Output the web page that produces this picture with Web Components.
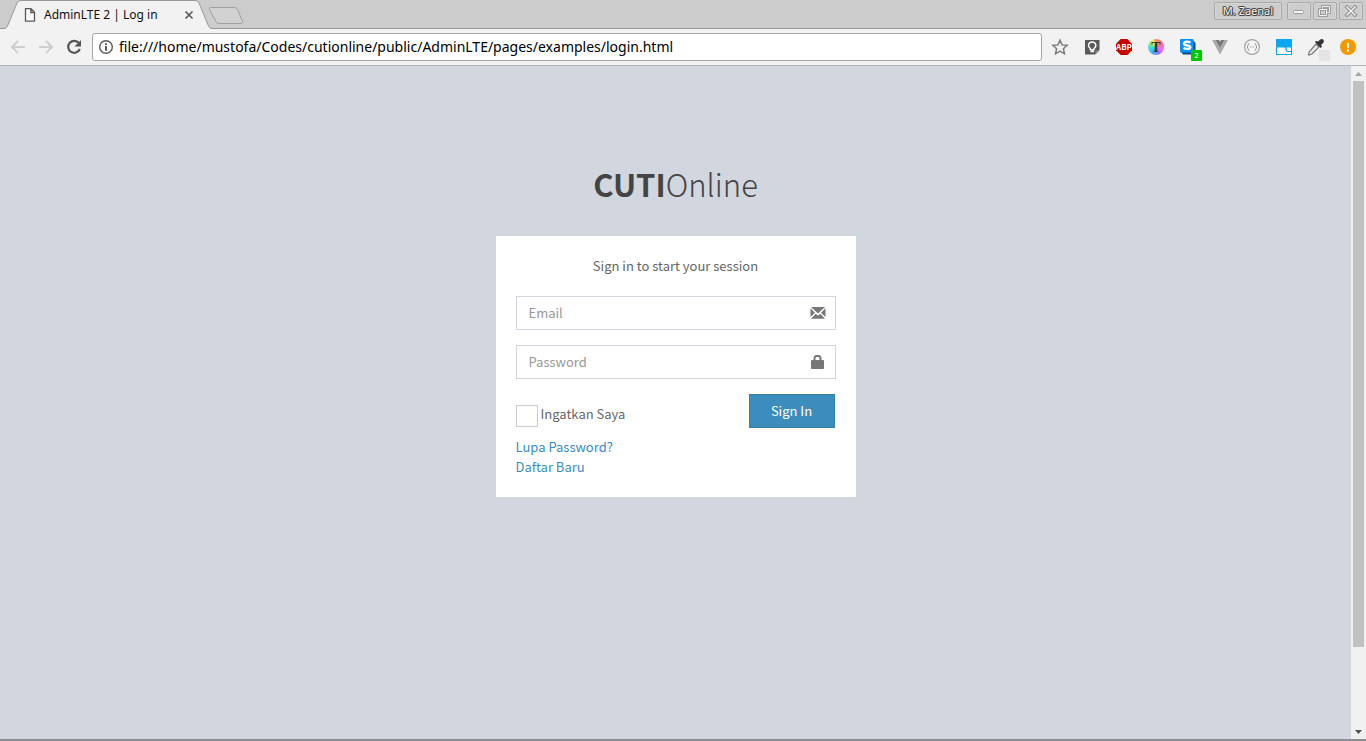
<!DOCTYPE html>
<html lang="id">
<head>
<meta charset="utf-8">
<meta name="viewport" content="width=device-width, initial-scale=1">
<title>AdminLTE 2 | Log in</title>
<style>
  html, body { margin: 0; height: 100%; }
  body { font: 14px/20px "Noto Sans", sans-serif; background: #d2d6de; }
</style>
</head>
<body>
<browser-window>
  <title-bar slot="title">
    <browser-tab>AdminLTE 2 | Log in</browser-tab>
    <window-controls slot="controls" user="M. Zaenal"></window-controls>
  </title-bar>
  <tool-bar slot="toolbar" address="file:///home/mustofa/Codes/cutionline/public/AdminLTE/pages/examples/login.html"></tool-bar>
  <login-page>
    <login-form></login-form>
  </login-page>
</browser-window>

<script>
const define = (name, html, setup) => {
  const template = document.createElement('template');
  template.innerHTML = html;
  customElements.define(name, class extends HTMLElement {
    constructor() {
      super();
      this.attachShadow({ mode: 'open' }).append(template.content.cloneNode(true));
    }
    connectedCallback() { if (setup) setup(this, this.shadowRoot); }
  });
};

define('browser-window', `
  <style>
    :host { display: flex; flex-direction: column; height: 100vh; box-sizing: border-box; border-bottom: 2px solid #8b8e93; }
    .view { flex: 1; min-height: 0; display: flex; }
    main { flex: 1; min-width: 0; background: #d2d6de; overflow: hidden; }
  </style>
  <slot name="title"></slot>
  <slot name="toolbar"></slot>
  <div class="view"><main><slot></slot></main><scroll-track></scroll-track></div>
`);

define('title-bar', `
  <style>
    :host { display: flex; height: 29px; box-sizing: border-box; background: #cccccc; box-shadow: inset 0 -1px #999; justify-content: space-between; }
    .tabs { display: flex; }
    .new { border: 0; padding: 0; background: none; width: 36px; height: 29px; margin-left: -4px; }
    svg { display: block; }
  </style>
  <div class="tabs"><slot></slot>
    <button class="new" aria-label="New tab"><svg width="36" height="29" viewBox="0 0 36 29"><path d="M2.5 7.500h24q2 0 3 2l5 12q.7 2-1.500 2H11q-2 0-3-2L1.500 9.500q-.7-2 1-2z" fill="#d2d2d2" stroke="#a0a0a0"/></svg></button>
  </div>
  <slot name="controls"></slot>
`);

define('browser-tab', `
  <style>
    :host { display: grid; width: 212px; height: 29px; font-size: 12px; line-height: 28px; color: #111; }
    .shape, .content { grid-area: 1 / 1; }
    .content { display: flex; align-items: center; padding: 0 17px 0 24px; height: 29px; }
    .name { flex: 1; margin-left: 8px; white-space: nowrap; }
    button { border: 0; background: none; padding: 0; width: 12px; height: 12px; }
    svg { display: block; }
  </style>
  <svg class="shape" width="212" height="29" viewBox="0 0 212 29"><path d="M0 29 5 28.500Q7 28 8 25L17 3Q18 .5 21 .5H195Q198 .5 199 3L208 25Q209.500 28.500 212 29z" fill="#f2f2f2"/><path d="M0 28.500H4Q6 28.500 7.500 26L17 3Q18 .5 21 .5H195Q198 .5 199 3L208.500 26Q210 28.500 212 28.500" fill="none" stroke="#999"/></svg>
  <div class="content">
    <svg width="12" height="14" viewBox="0 0 12 14"><path d="M1.500.7H7l3.500 3.500v9h-9zM6.800.7v3.800h3.700" fill="#fafafa" stroke="#5a5a5a" stroke-width="1.300"/></svg>
    <span class="name"><slot></slot></span>
    <button aria-label="Close tab"><svg width="12" height="12" viewBox="0 0 12 12"><path d="m2.500 2.500 7 7m0-7-7 7" stroke="#5a5a5a" stroke-width="1.700"/></svg></button>
  </div>
`);

define('window-controls', `
  <style>
    :host { display: flex; gap: 2px; padding: 2px 3px 0 0; }
    button { box-sizing: border-box; width: 24px; height: 18px; padding: 0; border: 1px solid #aaa; border-radius: 2px; background: #cdcdcd; box-shadow: inset 0 0 0 1px #d5d5d5; display: grid; place-items: center; }
    .user { width: 68px; margin-right: 3px; font: 11px/14px "Noto Sans", sans-serif; color: #f4f4f4; text-shadow: 1px 0 #444, -1px 0 #444, 0 1px #444, 0 -1px #444, 1px 1px #666, -1px -1px #666; white-space: nowrap; }
    svg { display: block; fill: none; }
  </style>
  <button class="user"></button>
  <button aria-label="Minimize"><svg width="14" height="12"><rect x="1.500" y="5.500" width="10" height="3" rx="1" fill="#f4f4f4" stroke="#999"/></svg></button>
  <button aria-label="Restore"><svg width="14" height="12"><path d="M4.500 3.500v-2h7v6h-3M1.500 4.500h7v6h-7z" stroke="#8d8d8d" stroke-width="2.500"/><path d="M4.500 3.500v-2h7v6h-3M1.500 4.500h7v6h-7z" stroke="#f2f2f2"/></svg></button>
  <button aria-label="Close"><svg width="14" height="12"><path d="m3 2 8 8m0-8-8 8" stroke="#8d8d8d" stroke-width="3.500" stroke-linecap="square"/><path d="m3 2 8 8m0-8-8 8" stroke="#f4f4f4" stroke-width="1.500" stroke-linecap="square"/></svg></button>
`, (host, root) => { root.querySelector('.user').textContent = host.getAttribute('user'); });

define('tool-bar', `
  <style>
    :host { display: flex; align-items: center; height: 37px; box-sizing: border-box; padding: 0 8px 0 9px; background: #f2f2f2; border-bottom: 1px solid #b3b5b9; }
    .nav { display: flex; gap: 10px; margin-right: 9px; }
    button { border: 0; background: none; padding: 0; width: 18px; height: 18px; }
    svg { display: block; }
    .address { flex: 1; min-width: 0; display: flex; align-items: center; height: 28px; box-sizing: border-box; border: 1px solid #a6a6a6; border-radius: 3px; background: #fff; padding-left: 5px; }
    input { flex: 1; min-width: 0; border: 0; outline: 0; padding: 0; margin-left: 5px; background: none; color: #000; font: 14px/20px "Noto Sans", sans-serif; }
    extension-icons { margin-left: 8px; }
  </style>
  <div class="nav">
    <button aria-label="Back"><svg width="18" height="18" viewBox="0 0 18 18"><path d="M16 9H3m6-6L3 9l6 6" fill="none" stroke="#cfcfcf" stroke-width="2"/></svg></button>
    <button aria-label="Forward"><svg width="18" height="18" viewBox="0 0 18 18"><path d="M2 9h13M9 3l6 6-6 6" fill="none" stroke="#cfcfcf" stroke-width="2"/></svg></button>
    <button aria-label="Reload"><svg width="18" height="18" viewBox="0 0 18 18"><path d="M14 5.200A6 6 0 1 0 14.800 11" fill="none" stroke="#555" stroke-width="2.200"/><path d="M16 2v6.500H9.500z" fill="#555"/></svg></button>
  </div>
  <div class="address">
    <svg width="16" height="16" viewBox="0 0 16 16"><circle cx="8" cy="8" r="6.300" fill="none" stroke="#5a5a5a" stroke-width="1.400"/><path d="M7 7h2v4.800H7zM7 4.200h2v1.700H7z" fill="#5a5a5a"/></svg>
    <input type="text" aria-label="Address">
  </div>
  <extension-icons></extension-icons>
`, (host, root) => { root.querySelector('input').value = host.getAttribute('address'); });

define('extension-icons', `
  <style>
    :host { display: flex; gap: 12px; }
    button { position: relative; border: 0; background: none; padding: 0; width: 20px; height: 20px; }
    svg { display: block; }
    .abp { width: 20px; height: 20px; display: grid; place-items: center; }
    .abp svg, .abp span { grid-area: 1 / 1; }
    .abp span { position: relative; color: #fff; font: bold 8px/20px "Noto Sans CJK SC", sans-serif; }
    .wheel { box-sizing: border-box; width: 16px; height: 16px; margin: 2px; border-radius: 50%; background: conic-gradient(#ff8a5c, #ff6c96 60deg, #f36fe8 110deg, #a96bff 155deg, #4ca6ff 205deg, #30dceb 255deg, #8ee879 300deg, #ffe45c 335deg, #ff8a5c); font: bold 14px/18px "Liberation Serif", serif; color: #333; text-align: center; }
    .badge { position: absolute; left: 13px; top: 13px; width: 11px; height: 11px; border-radius: 1px; background: #00c800; color: #fff; font: 7px/11px "Noto Sans", sans-serif; text-align: center; }
    .dim { background: #e4e4e4; color: #f4f4f4; }
  </style>
  <button aria-label="Bookmark"><svg width="20" height="20" viewBox="0 0 20 20"><path d="m10 3.200 2.100 4.700 5.100.5-3.800 3.400 1.100 5L10 14.200l-4.500 2.600 1.100-5-3.800-3.400 5.100-.5z" fill="none" stroke="#7c7c7c" stroke-width="1.500"/></svg></button>
  <button aria-label="Ideas"><svg width="20" height="20" viewBox="0 0 20 20"><path d="M3 3h14.500v10L13 17.500H3z" fill="#595959"/><path d="M13.500 17.500v-4h4z" fill="#8c8c8c"/><path d="M8.300 11.500C5 9 6.800 5 10.200 5s5.200 4 1.800 6.500v1.300H8.300zM8.500 14.500H12" fill="none" stroke="#fff" stroke-width="1.400"/></svg></button>
  <button aria-label="Ad blocker"><span class="abp"><svg width="20" height="20" viewBox="0 0 20 20"><path d="M6.700 2h6.600L18 6.700v6.600L13.300 18H6.700L2 13.300V6.700z" fill="#c80000"/></svg><span>ABP</span></span></button>
  <button aria-label="Type"><div class="wheel">T</div></button>
  <button aria-label="Stylish"><svg width="20" height="20" viewBox="0 0 20 20"><path d="m2 13 3 4.500h12.500V6L14 2z" fill="#064a80"/><rect x="2" y="2" width="13.500" height="13.500" rx="1" fill="#0a91f5"/><path d="M12.500 5.500c-1.500-1-6.500-1.500-6.500 1.200 0 2.600 6.300 1 6.300 3.500 0 2.300-4.800 2-6.800.8" fill="none" stroke="#fff" stroke-width="2.400"/></svg><span class="badge">2</span></button>
  <button aria-label="Vue"><svg width="20" height="20" viewBox="0 0 20 20"><path d="M2 3h3.500L10 11l4.500-8H18l-8 14.500z" fill="#aaa"/><path d="M5.500 3H9l1 1.800L11 3h3.500L10 11z" fill="#777"/></svg></button>
  <button aria-label="JSON"><svg width="20" height="20" viewBox="0 0 20 20"><circle cx="10" cy="10" r="7.400" fill="#f6f6f6" stroke="#a2a2a2" stroke-width="1.200"/><path d="M7.500 6.500q-1.500 0-1.500 1.500v1L5 10l1 1v1q0 1.500 1.500 1.500M12.500 6.500q1.500 0 1.500 1.500v1l1 1-1 1v1q0 1.500-1.500 1.500M8 10h1m.7 0h.8m.6 0h.9" fill="none" stroke="#999"/></svg></button>
  <button aria-label="Window"><svg width="20" height="20" viewBox="0 0 20 20"><path d="M2 2h16v16H2z" fill="#0ba8f2"/><path d="M3 10.500h7.500c1.500 0 .5 4.500 3 4.500H17v2H3zM12.500 10.500H17V14h-3.500c-1 0-.5-2.500-1-3.500z" fill="#fff"/></svg></button>
  <button aria-label="Color picker"><svg width="20" height="20" viewBox="0 0 20 20"><path d="m10 7 3 3-7 7-3 1-.5-.5 1-3z" fill="#e8e8e8" stroke="#777" stroke-width="1.200"/><path d="m9 5 1.500-1.300 1.500 1L14.200 2.500q2-1.300 3.200.2t-.2 3.200L15 8l1 1.500L14.500 11z" fill="#333"/></svg><span class="badge dim">-</span></button>
  <button aria-label="Update"><svg width="20" height="20" viewBox="0 0 20 20"><circle cx="10" cy="10" r="8" fill="#f29900"/><path d="M9 6h2v5H9zM9 12.500h2v2H9z" fill="#fff"/></svg></button>
`);

define('scroll-track', `
  <style>
    :host { display: flex; flex-direction: column; width: 15px; background: #f1f1f1; }
    .rail { flex: 1; padding: 0 2px; }
    .thumb { height: 88%; background: #c1c1c1; }
    svg { display: block; }
  </style>
  <svg width="15" height="15"><path d="M4 10h7L7.500 6z" fill="#a3a3a3"/></svg>
  <div class="rail"><div class="thumb"></div></div>
  <svg width="15" height="15"><path d="M4 6h7l-3.500 4z" fill="#505050"/></svg>
`);

define('login-page', `
  <style>
    :host { display: flow-root; font: 13px/20px "Noto Sans CJK SC", sans-serif; color: #666; }
    .box { width: 360px; max-width: 90%; margin: 7% auto; }
    h1 { margin: 0 0 29px; text-align: center; font-size: 31px; line-height: 46px; font-weight: 300; }
    a { color: #444; text-decoration: none; }
    b { font-weight: 700; }
  </style>
  <div class="box">
    <h1><a href="#"><b>CUTI</b>Online</a></h1>
    <slot></slot>
  </div>
`);

define('login-form', `
  <style>
    :host { display: block; background: #fff; padding: 20px; }
    p { margin: 0 0 20px; text-align: center; }
    form { display: flex; flex-direction: column; gap: 15px; }
    .row { display: flex; justify-content: space-between; align-items: flex-start; }
    label { display: flex; align-items: flex-start; gap: 3px; margin-top: 10px; }
    input { appearance: none; box-sizing: border-box; width: 22px; height: 22px; margin: 1px 0 0; border: 1px solid #d0cdc8; background: #fff; }
    input:checked { background: #3c8dbc; box-shadow: inset 0 0 0 4px #fff; }
    button { box-sizing: border-box; width: 86px; height: 34px; padding: 0; margin-right: 1px; border: 1px solid #367fa9; background: #3c8dbc; color: #fff; font: inherit; }
    nav { display: flex; flex-direction: column; align-items: flex-start; margin-top: 9px; }
    a { color: #3c8dbc; text-decoration: none; }
  </style>
  <p>Sign in to start your session</p>
  <form>
    <icon-field type="email" label="Email"><svg width="16" height="14" viewBox="0 0 16 14" fill="#777"><path d="M1 1h14L8 7.500zM.500 2.200 5 6.700.500 11zM15.500 2.200 11 6.700l4.500 4.300zM1 12.800l4.700-5L8 9.800l2.300-2 4.700 5z"/></svg></icon-field>
    <icon-field type="password" label="Password"><svg width="16" height="14" viewBox="0 0 16 14"><path d="M4.500 6V3.500Q4.500 1 6.500 1h2q2 0 2 2.500V6" fill="none" stroke="#777" stroke-width="2"/><path d="M2 5h11q1 0 1 1v7q0 1-1 1H2q-1 0-1-1V6q0-1 1-1z" fill="#777"/></svg></icon-field>
    <div class="row">
      <label for="remember"><input type="checkbox" id="remember">Ingatkan Saya</label>
      <button type="submit">Sign In</button>
    </div>
  </form>
  <nav><a href="#">Lupa Password?</a><a href="#">Daftar Baru</a></nav>
`);

define('icon-field', `
  <style>
    :host { display: flex; align-items: center; height: 34px; box-sizing: border-box; border: 1px solid #d2d6de; background: #fff; padding: 0 9px 0 12px; }
    input { flex: 1; min-width: 0; height: 30px; padding: 0; border: 0; outline: 0; background: none; color: #555; font: inherit; }
    input::placeholder { color: #999; opacity: 1; }
  </style>
  <input><slot></slot>
`, (host, root) => {
  const input = root.querySelector('input');
  input.type = host.getAttribute('type');
  input.placeholder = host.getAttribute('label');
  input.setAttribute('aria-label', host.getAttribute('label'));
});
</script>
</body>
</html>
